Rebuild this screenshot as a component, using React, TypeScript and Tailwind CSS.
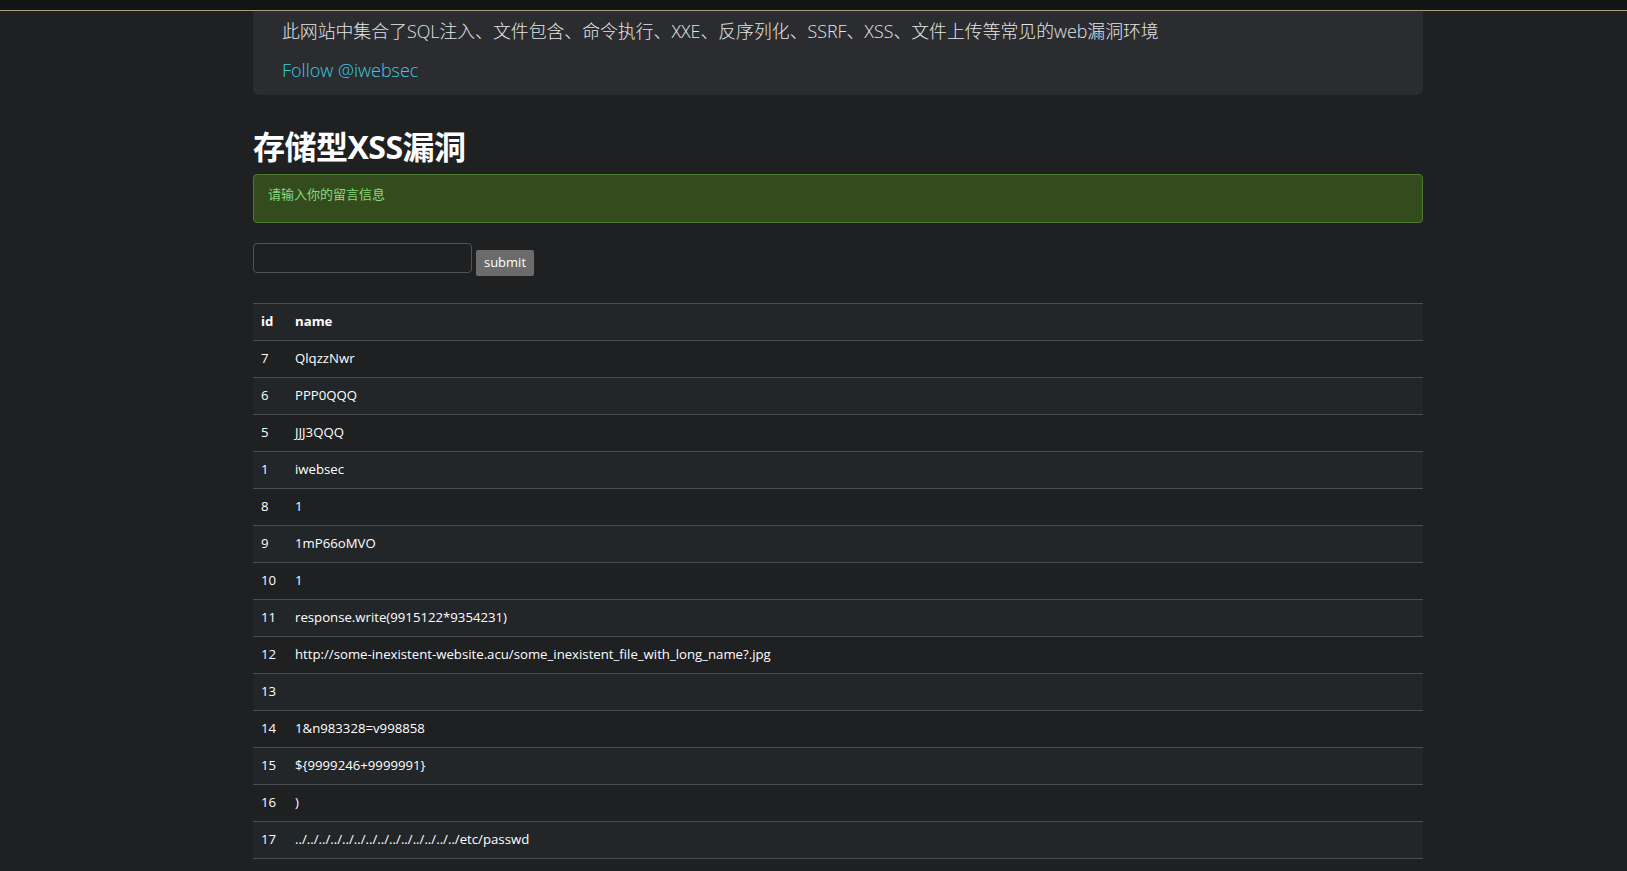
import React from "react";

const rows: [string, string][] = [
  ["7", "QlqzzNwr"],
  ["6", "PPP0QQQ"],
  ["5", "JJJ3QQQ"],
  ["1", "iwebsec"],
  ["8", "1"],
  ["9", "1mP66oMVO"],
  ["10", "1"],
  ["11", "response.write(9915122*9354231)"],
  ["12", "http://some-inexistent-website.acu/some_inexistent_file_with_long_name?.jpg"],
  ["13", ""],
  ["14", "1&n983328=v998858"],
  ["15", "${9999246+9999991}"],
  ["16", ")"],
  ["17", "../../../../../../../../../../../../../../etc/passwd"],
];

export default function App() {
  return (
    <div
      className="min-h-[871px] w-full bg-[#1e2022] text-[#e6e6e6]"
      style={{ fontFamily: '"Open Sans", "Noto Sans CJK SC", sans-serif' }}
    >
      <div className="h-[10px] bg-[#131515]" />
      <div className="h-px bg-[#a99d85]" />
      <div className="ml-[253px] w-[1170px]">
        <div className="h-[84px] rounded-b-[6px] bg-[#2b2c30] pl-[29px] pt-[8px]">
          <p className="text-[17.85px] leading-[24px] font-light text-[#e4e4e4]">
            此网站中集合了SQL注入、文件包含、命令执行、XXE、反序列化、SSRF、XSS、文件上传等常见的web漏洞环境
          </p>
          <p className="mt-[15px] text-[18px] leading-[24px] font-light text-[#3ccbe0]">
            Follow @iwebsec
          </p>
        </div>
        <h1 className="mt-[32px] text-[32px] leading-[40px] font-bold text-white tracking-[-0.5px]">
          存储型XSS漏洞
        </h1>
        <div className="mt-[7px] h-[49px] rounded-[4px] border border-[#4c7a2d] bg-[#344b1e] pl-[14px] pt-[6px]">
          <span className="text-[13px] leading-[18px] text-[#86da7c]">请输入你的留言信息</span>
        </div>
        <div className="mt-[20px] flex items-end">
          <input
            className="h-[30px] w-[219px] rounded-[4px] border border-[#505457] bg-[#1e2022] px-2 text-[13px] outline-none"
            type="text"
          />
          <button className="ml-[4px] h-[26px] w-[58px] rounded-[2px] bg-[#6b6b6b] text-[13px] text-white mb-[-3px]">
            submit
          </button>
        </div>
        <table className="mt-[30px] w-full border-collapse text-[13.2px]">
          <thead>
            <tr className="h-[37px] border-t border-[#4a4d50] bg-[#232628]">
              <th className="w-[34px] pl-[8px] text-left font-bold text-white">id</th>
              <th className="pl-[8px] text-left font-bold text-white">name</th>
            </tr>
          </thead>
          <tbody>
            {rows.map(([id, name], i) => (
              <tr
                key={id}
                className={
                  "h-[37px] border-t border-[#4a4d50] " + (i % 2 === 1 ? "bg-[#232628]" : "bg-[#1e2022]")
                }
              >
                <td className="pl-[8px] text-white">{id}</td>
                <td className="pl-[8px] text-white">{name}</td>
              </tr>
            ))}
            <tr className="h-0 border-t border-[#4a4d50]">
              <td />
              <td />
            </tr>
          </tbody>
        </table>
      </div>
    </div>
  );
}
